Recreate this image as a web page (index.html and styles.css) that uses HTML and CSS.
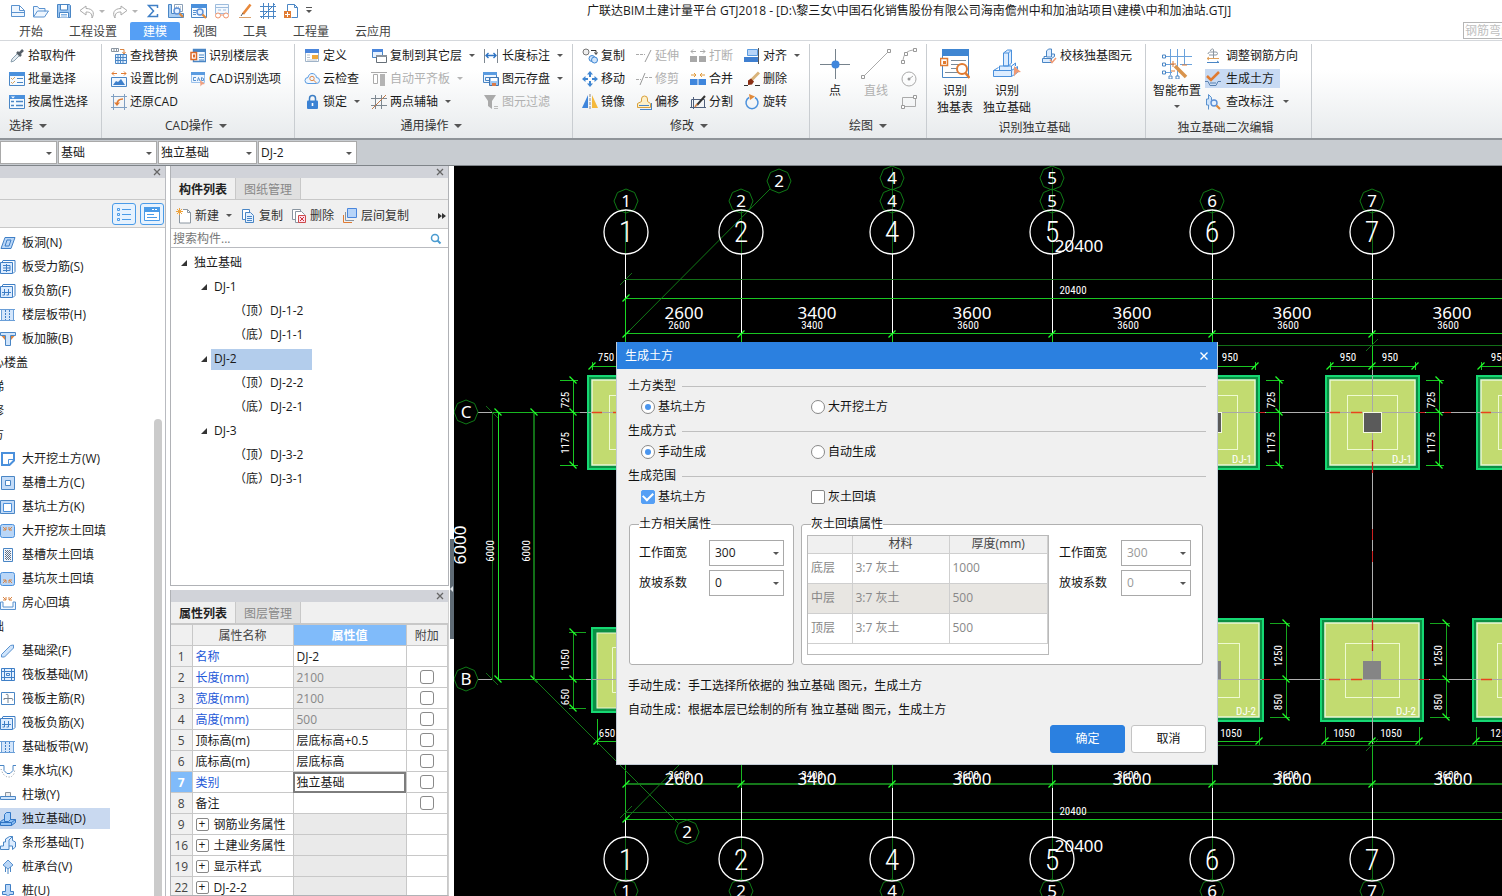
FILE: index.html
```html
<!DOCTYPE html>
<html lang="zh-CN">
<head>
    <meta charset="UTF-8">
    <meta name="viewport" content="width=device-width, initial-scale=1.0">
    <title>广联达BIM土建计量平台 GTJ2018</title>
    <link rel="stylesheet" href="styles.css">
</head>
<body>
    <!-- Icon sprite -->
    <svg class="sprite" aria-hidden="true">
        <defs>
            <g id="blue-table" fill="none" stroke="#4a86c5"><path d="M.5 1.5h15v13H.5z" fill="#f4faff"/><path d="M0 1h16v4H0z" fill="#4a90dc" stroke="none"/></g>
            <g id="magnifier" fill="none"><circle cx="9" cy="9" r="3" stroke="#5b8fd6" stroke-width="1.4" fill="#e6f1ff"/><path d="M11.500 11.500l3.500 3.500" stroke="#e08a3c" stroke-width="2.200"/></g>
            <g id="tick"><path d="M-3.500 3.500l7-7" stroke="#1fff2a" stroke-width="1.200"/></g>
            <g id="tick-dim"><path d="M-6 6L6-6" stroke="#126e17"/></g>
        </defs>
        <symbol id="i-close" viewBox="0 0 8 8"><path d="M1 1l6 6M7 1L1 7" stroke="#666" stroke-width="1.300"/></symbol>
        <symbol id="i-new" viewBox="0 0 16 16"><path d="M1.500 2.500h8l5 5v6h-13zM9.500 2.500v5h5M1 9.500h14" fill="#eef6ff" stroke="#5a92cf"/></symbol>
        <symbol id="i-open" viewBox="0 0 16 16"><path d="M.5 14V3.500h4l1.500 2h6v3M.5 14l4-6h11l-4 6z" fill="#eef6ff" stroke="#5a92cf"/></symbol>
        <symbol id="i-save" viewBox="0 0 16 16"><path d="M1.500 1.500h12l1 1v12h-13z" fill="#9cc6f2" stroke="#4a86c5"/><path d="M4.500 2v5h7V2M3.500 14.500V9.500h9v5" fill="#fff" stroke="#4a86c5"/><path d="M5 11.500h6M5 13h6" stroke="#7fb0e4"/></symbol>
        <symbol id="i-undo" viewBox="0 0 16 16"><path d="M7 3L1 7.500l6 4.500V9c4 0 6 1 6 6 3-5 1-9.500-6-9.500z" fill="#fff" stroke="#aaa"/></symbol>
        <symbol id="i-redo" viewBox="0 0 16 16"><path d="M9 3l6 4.500L9 12V9c-4 0-6 1-6 6-3-5-1-9.500 6-9.500z" fill="#fff" stroke="#aaa"/></symbol>
        <symbol id="i-sum" viewBox="0 0 16 16"><path d="M12.500 5V2.500h-9L8.500 8l-5 5.500h9V11" fill="none" stroke="#3f7fc6" stroke-width="1.500"/></symbol>
        <symbol id="i-report" viewBox="0 0 16 16"><path d="M.5 1.500h3v9h12v4H.5z" fill="#a9cdf3" stroke="#4a86c5"/><path d="M6.500 1.500h8v7h-8z" fill="#fff" stroke="#8aa0b8"/><path d="M8 4h5M8 6h5" stroke="#8aa0b8" stroke-dasharray="1 1"/><use href="#magnifier" y="-1"/></symbol>
        <symbol id="i-winfind" viewBox="0 0 16 16"><use href="#blue-table"/><path d="M2 7.500h4M2 9.500h3M2 11.500h3" stroke="#5a92cf"/><use href="#magnifier"/></symbol>
        <symbol id="i-glasses" viewBox="0 0 16 16"><path d="M1.500 1.500h13v9h-13zM1.500 4.500h13" fill="#f4f9ff" stroke="#9dbcdd"/><path d="M4 7h3M9 7h3" stroke="#9dbcdd"/><circle cx="4" cy="12.500" r="2.500" fill="#fff" stroke="#f0936a"/><circle cx="12" cy="12.500" r="2.500" fill="#fff" stroke="#f0936a"/><path d="M6.500 12h3" stroke="#f0936a"/></symbol>
        <symbol id="i-pen" viewBox="0 0 16 16"><path d="M13.500 1.500L6 11" stroke="#e8883a" stroke-width="2.600"/><path d="M6 10l-2 3" stroke="#555"/><path d="M2 14.500h12" stroke="#d9a06c"/></symbol>
        <symbol id="i-grid" viewBox="0 0 16 16"><path d="M0 3.500h16M0 8.500h16M0 13.500h16M3.500 0v16M8.500 0v16M13.500 0v16M1 15L15 1" stroke="#4a86c5" fill="none"/></symbol>
        <symbol id="i-docplus" viewBox="0 0 16 16"><path d="M4.500 8V1.500h7l3 3v10h-6M11.500 1.500v3h3" fill="none" stroke="#4a86c5"/><path d="M1 8h7v7H1z" fill="#e07b32"/><path d="M2 11.500h5M4.500 9v5" stroke="#fff"/></symbol>

        <symbol id="i-pick" viewBox="0 0 16 16"><path d="M2 14l1-3 6-6 2 2-6 6z" fill="#e4ecf2" stroke="#8ba0ae"/><path d="M8 4l4 4M10 6l4-4" stroke="#555f68" stroke-width="2.600"/></symbol>
        <symbol id="i-batch" viewBox="0 0 16 16"><use href="#blue-table"/><path d="M2 7l1.500 1.500L6 6M2 11l1.500 1.500L6 10" stroke="#d9a05a" fill="none"/><path d="M8 7.500h6M8 11.500h6" stroke="#4a86c5"/></symbol>
        <symbol id="i-byprop" viewBox="0 0 16 16"><use href="#blue-table"/><path d="M2 7.500h3M2 11.500h3M7 7.500h7M7 11.500h7" stroke="#4a86c5" stroke-width="1.400"/><path d="M2 2.500h4l-2 2z" fill="#fff"/></symbol>
        <symbol id="i-replace" viewBox="0 0 16 16"><path d="M.5.500h7v3h-7zM3 .5v3M5.500.500v3" fill="none" stroke="#8a95a0"/><path d="M9 1.500h4v4M11.500 4l1.500 2 1.500-2" stroke="#d98442" fill="none"/><path d="M4.500 6.500h11v9h-11zM7 6.500v9M9.500 6.500v9M12 6.500v9M4.500 9.500h11M4.500 12.500h11" fill="#e3f0ff" stroke="#4a86c5"/></symbol>
        <symbol id="i-scale" viewBox="0 0 16 16"><path d="M1 2.500h5M10 2.500h5M3 .5l-2 2 2 2M13 .5l2 2-2 2" fill="none" stroke="#e07b32"/><path d="M.5 6.500h15v9H.5z" fill="#eef6ff" stroke="#4a86c5"/><path d="M2 14l3-4 2 1 3-3 4 6z" fill="#3d7fcb"/></symbol>
        <symbol id="i-restore" viewBox="0 0 16 16"><path d="M2.500 0v16M0 2.500h16M13.500 0v16M0 13.500h16" stroke="#7f9fc2"/><path d="M12 5C8 5 6 7 6 10.500" fill="none" stroke="#e07b32" stroke-width="1.500"/><path d="M3 8.500h6L6 12z" fill="#e07b32"/></symbol>
        <symbol id="i-floor" viewBox="0 0 16 16"><path d="M3.500 1.500h12v12h-12z" fill="#f4faff" stroke="#4a86c5" stroke-width="1.400"/><path d="M3 1h13v3H3z" fill="#4a86c5"/><path d="M9 7h5M9 9.500h5M9 12h5" stroke="#4a86c5"/><path d="M1 4.500h5.500v7H1z" fill="#fff" stroke="#dd6b2a" stroke-width="1.500"/><path d="M3 6.500h2v3H3z" fill="#dd6b2a"/></symbol>
        <symbol id="i-cadopt" viewBox="0 0 16 16"><path d="M1.500 1.500h13v10h-13z" fill="#eef6ff" stroke="#9cc2ec"/><path d="M1 1h14v3H1z" fill="#5a9be0"/><path d="M6 6.500H3.500v3H6M7.500 10l1-3.500L10 10M11.500 6.500v3h2v-2z" fill="none" stroke="#5a92cf"/><path d="M10 9l5 4-3 .5-1.500 2z" fill="#f0a080"/></symbol>

        <symbol id="i-define" viewBox="0 0 16 16"><path d="M1.500 1.500h13v12h-13z" fill="#fff" stroke="#9fb3c8"/><path d="M1 1h14v4H1z" fill="#4a86dc"/><path d="M3 7h3M3 9.500h3M3 12h10" stroke="#b9c4cf"/><path d="M8 7h6v4H8z" fill="#f0a93c"/></symbol>
        <symbol id="i-cloud" viewBox="0 0 16 16"><path d="M4 12.500h8.500a3 3 0 0 0 0-6C12 3.500 10 2.500 8 2.500S4.500 4 4 6.500a3 3 0 0 0 0 6z" fill="#eef6ff" stroke="#5a9be0"/><circle cx="8" cy="7.500" r="2.200" fill="none" stroke="#e08a4c"/><path d="M9.500 9l3 3" stroke="#e08a4c"/></symbol>
        <symbol id="i-lock" viewBox="0 0 16 16"><path d="M5.500 7V4.500a3 3 0 0 1 6 0V7" fill="none" stroke="#3b7dc4" stroke-width="1.500"/><rect x="3" y="6.500" width="11" height="8.500" rx="1" fill="#3b82d4"/><path d="M8.500 9v3" stroke="#fff" stroke-width="1.600"/></symbol>
        <symbol id="i-copyfloor" viewBox="0 0 16 16"><path d="M1.500 1.500h10v8h-10z" fill="#e7f2ff" stroke="#4a86c5"/><path d="M1 1h11v3H1z" fill="#4a86dc"/><path d="M5.500 7.500h10v7h-10z" fill="#fff" stroke="#666f78"/><path d="M5 7h11v2H5z" fill="#8a939c"/></symbol>
        <symbol id="i-autoflat" viewBox="0 0 16 16"><path d="M0 1.500h16" stroke="#aaa"/><path d="M2.500 3.500h4v9h-4z" fill="#fff" stroke="#aaa"/><path d="M9 3h5v12H9z" fill="#b4b4b4"/></symbol>
        <symbol id="i-axis" viewBox="0 0 16 16"><path d="M4.500 1v14M10.500 1v14M0 4.500h16M0 11.500h16" stroke="#7d8790"/><path d="M1 15L15 1" stroke="#c07a4a"/></symbol>
        <symbol id="i-length" viewBox="0 0 16 16"><path d="M1.500 1v14M14.500 1v14" stroke="#7d8790"/><path d="M3 7.500h10M5.500 5L3 7.500 5.500 10M10.500 5L13 7.500 10.500 10" stroke="#2f74c4" fill="none" stroke-width="1.400"/></symbol>
        <symbol id="i-store" viewBox="0 0 16 16"><path d="M.5 1.500h13v10H.5z" fill="#eef6ff" stroke="#4a86c5"/><path d="M0 1h14v3H0z" fill="#5a9be0"/><path d="M2.500 6.500h4v3h-4z" fill="none" stroke="#4a86c5"/><path d="M6.500 6.500h9v8h-9z" fill="#9cc6f2" stroke="#3f74b0"/><path d="M8 7h6v3H8z" fill="#fff"/><path d="M9 12h4v3H9z" fill="#d97b4a"/></symbol>
        <symbol id="i-filter" viewBox="0 0 16 16"><path d="M1 1h12L9 7v8l-4-3V7z" fill="#aaa"/><path d="M11 12.500h4M11 14.500h4" stroke="#bbb"/></symbol>

        <symbol id="i-copy2" viewBox="0 0 16 16"><circle cx="4" cy="4" r="3" fill="#eee" stroke="#777"/><circle cx="10" cy="10.500" r="3" fill="#cfe4fb" stroke="#3f86d2"/><circle cx="12.500" cy="12" r="3" fill="#cfe4fb" stroke="#3f86d2"/><path d="M9 2.500h5v3M12.500 4.500l1.500 2 1.500-2" fill="none" stroke="#333"/></symbol>
        <symbol id="i-move" viewBox="0 0 16 16"><path d="M8 0l3 3.500H9V6H7V3.500H5zM8 16l3-3.500H9V10H7v2.500H5zM0 8l3.500-3v2H6v2H3.500v2zM16 8l-3.500-3v2H10v2h2.500v2z" fill="#3f86d2"/></symbol>
        <symbol id="i-mirror" viewBox="0 0 16 16"><path d="M6 1v13H0z" fill="#3f86dc"/><path d="M10 1v13h6z" fill="#f5b93c"/><path d="M8 0v16" stroke="#888" stroke-dasharray="3 1"/></symbol>
        <symbol id="i-extend" viewBox="0 0 16 16"><path d="M0 6.500h9" stroke="#aaa" stroke-dasharray="3 1"/><path d="M9 14l6-12" stroke="#999"/></symbol>
        <symbol id="i-trim" viewBox="0 0 16 16"><path d="M0 8.500h5M9 6.500h7" stroke="#aaa" stroke-dasharray="3 1"/><path d="M4 14l5-12" stroke="#999"/></symbol>
        <symbol id="i-offset" viewBox="0 0 16 16"><path d="M1.500 13.500v-4l4-2V5a3 3 0 0 1 6 0v2.500l3 2v4z" fill="#fdf0c8" stroke="#d9a03c"/><path d="M3 11.500h10M4 15.500h12M15.500 9v6" stroke="#4a86c5"/></symbol>
        <symbol id="i-break" viewBox="0 0 16 16"><path d="M0 8h7v6H0zM9 8h7v6H9z" fill="#a8a8a8"/><path d="M1 3.500h5M10 3.500h5M3 1.500l-2 2 2 2M13 1.500l2 2-2 2" fill="none" stroke="#aaa"/></symbol>
        <symbol id="i-merge" viewBox="0 0 16 16"><path d="M0 8h7.500v6H0zM8.500 8H16v6H8.500z" fill="#3f86dc"/><path d="M1 4h5M10 4h5M4 2l2 2-2 2M12 2l-2 2 2 2" fill="none" stroke="#e09a3c"/></symbol>
        <symbol id="i-split" viewBox="0 0 16 16"><path d="M1.500 5.500h13v8h-13zM0 13.500h16M3.500 3v12" fill="none" stroke="#50607c"/><path d="M15 2L7 11" stroke="#333" stroke-width="2"/><path d="M7 10l-2 3" stroke="#d98442" stroke-width="1.500"/></symbol>
        <symbol id="i-align" viewBox="0 0 16 16"><path d="M3.500 1.500h10v6h-10z" fill="#b7d4f8" stroke="#5a9be0"/><path d="M0 9h14v5H0z" fill="#3f7fd0"/><path d="M14.500 0v16" stroke="#555"/></symbol>
        <symbol id="i-erase" viewBox="0 0 16 16"><path d="M15 1.500L7.500 9" stroke="#d9b37a" stroke-width="3"/><path d="M4 9.500l3-2 3 3-2 3-4 .5z" fill="#8a2f14"/><path d="M0 14.500h4M11 14.500h5" stroke="#333"/></symbol>
        <symbol id="i-rotate" viewBox="0 0 16 16"><path d="M11 3.500A6 6 0 1 1 5 3.500" fill="none" stroke="#4a90dc" stroke-width="1.500"/><path d="M5 0l6 2.500L6 6z" fill="#e08a3c"/></symbol>

        <symbol id="i-point" viewBox="0 0 30 30"><path d="M15.500 0v30M0 15.500h30" stroke="#76828c"/><circle cx="15.500" cy="15.500" r="4" fill="#3f86dc"/></symbol>
        <symbol id="i-line" viewBox="0 0 30 30"><path d="M3 27L27 3" stroke="#aaa"/><path d="M.5 26.500h3v3h-3zM26.500.500h3v3h-3z" fill="#fff" stroke="#999"/></symbol>
        <symbol id="i-arc" viewBox="0 0 16 16"><path d="M2 14C2 6 6 2 14 2" fill="none" stroke="#aaa"/><path d="M.5 12.500h3v3h-3zM3.500 4.500h3v3h-3zM12.500.500h3v3h-3z" fill="#fff" stroke="#999"/></symbol>
        <symbol id="i-circle" viewBox="0 0 16 16"><circle cx="8" cy="8" r="7" fill="none" stroke="#aaa"/><path d="M8 8l4-3" stroke="#aaa"/><circle cx="8" cy="8" r="1.500" fill="#999"/></symbol>
        <symbol id="i-rect" viewBox="0 0 16 16"><path d="M1.500 3.500h13v9h-13z" fill="none" stroke="#aaa"/><path d="M.5 11.500h3v3h-3zM12.500 1.500h3v3h-3z" fill="#fff" stroke="#999"/></symbol>
        <symbol id="i-idtable" viewBox="0 0 30 30"><path d="M2.500.500h26v28h-26z" fill="#fff" stroke="#4a86c5"/><path d="M2 0h27v7H2z" fill="#3f86d2"/><path d="M11 11.500h15M11 15.500h10M11 19.500h8M5 23.500h13" stroke="#7a8a99"/><path d="M.5 9.500h7v7h-7z" fill="#fff" stroke="#e07b32" stroke-width="1.500"/><path d="M3 12h3v3H3z" fill="#e07b32"/><circle cx="22" cy="20" r="5" fill="#fff" stroke="#e07b32" stroke-width="2"/><path d="M25.500 24l4 5" stroke="#e07b32" stroke-width="2.500"/></symbol>
        <symbol id="i-footing" viewBox="0 0 30 30"><path d="M11.500 17V4l4-3h4v13l-3 3zM11.500 4h5v13M16.500 4l3-3M7.500 21v-4h12v4M19.500 17l4-3v3M1.500 27.500v-6h18v6zM19.500 21.500l6-4v6l-6 4M1.500 21.500l5-3" fill="#dcecff" stroke="#4a90dc"/><path d="M22 17l7 6-4 .5-3 4z" fill="#f09a74"/></symbol>
        <symbol id="i-check" viewBox="0 0 16 16"><path d="M5.500 9V3l2-2h3v8zM1.500 14.500v-4h9v4zM3 10V8.500h2.500M10.500 10.500l3-2V6h-3" fill="#dcecff" stroke="#4a86c5"/><path d="M9 11.500l2 3L15 10" fill="none" stroke="#f09a74" stroke-width="1.500"/></symbol>
        <symbol id="i-smart" viewBox="0 0 30 30"><path d="M8.500 0v26M15.500 0v30M22.500 0v16M2 7.500h28M2 15.500h10M18 15.500h12M2 23.500h8" stroke="#6aa2dc"/><path d="M.5 6h3v3h-3zM.5 14h3v3h-3zM.5 22h3v3h-3zM7 27h3v3H7zM14 27h3v3h-3z" fill="#fff" stroke="#4a86c5"/><path d="M13 17l11 11" stroke="#d9934c" stroke-width="3.500"/><path d="M11 12v6M8 15h6M20 16h5M9 22h4" stroke="#e07b32"/></symbol>
        <symbol id="i-rebar" viewBox="0 0 16 16"><path d="M8.500 10V2c0-2-3-1-3 1M3 6c0-2 2-2 4-2h4c2 0 2 3 0 3H4" fill="none" stroke="#8a95a0"/><path d="M2 10.500h12M4 9l-2 1.500L4 12" fill="none" stroke="#e0a05a"/><path d="M2 14.500h12M12 13l2 1.500" stroke="#4a86c5"/></symbol>
        <symbol id="i-earth" viewBox="0 0 16 16"><path d="M2 5l4 4 8-8" fill="none" stroke="#e07b32" stroke-width="2.500"/><path d="M0 10.500h3l2 4h6l2-4h3M5 12h6" fill="none" stroke="#5a82b0"/></symbol>
        <symbol id="i-review" viewBox="0 0 16 16"><path d="M3.500 15.500V11h-2V5h2V.500l3 3v3" fill="#cfe4fb" stroke="#5a92cf"/><use href="#magnifier"/></symbol>

        <symbol id="i-add" viewBox="0 0 16 16"><path d="M3.500 3.500V15h11V4.500l-3-3H7M11.500 1.500v3h3" fill="#fff" stroke="#8a95a0"/><path d="M3.500 0v7M0 3.500h7M1 1l5 5M6 1L1 6" stroke="#eda23c"/></symbol>
        <symbol id="i-docs" viewBox="0 0 16 16"><path d="M2.500 1.500h7v10h-7z" fill="#fff" stroke="#4a86c5"/><path d="M5.500 4.500h5l3 3v7h-8z" fill="#e3f0ff" stroke="#4a86c5"/><path d="M7 8.500h5M7 10.500h5M7 12.500h5" stroke="#4a86c5"/></symbol>
        <symbol id="i-docdel" viewBox="0 0 16 16"><path d="M1.500 1.500h8v10h-8z" fill="#fff" stroke="#8a95a0"/><path d="M4.500 3.500h6l3 3v8h-9z" fill="#fff" stroke="#8a95a0"/><path d="M7.500 7.500h7v7h-7z" fill="#fde" stroke="#cc4a4a"/><path d="M9 9l4 4M13 9l-4 4" stroke="#cc3a3a"/></symbol>
        <symbol id="i-layers" viewBox="0 0 16 16"><path d="M1.500 7v7.500H10" fill="none" stroke="#e07b32"/><path d="M3.500 4v8.500H12" fill="none" stroke="#8a95a0"/><path d="M5.500.500h9v9h-9z" fill="#b7d4f8" stroke="#4a86dc"/></symbol>

        <symbol id="i-hole" viewBox="0 0 16 16"><path d="M1 13.500L5 2.500h10l-4 11zM5 11l2-6h4l-2 6z" fill="#b9d6f7" stroke="#3f7fc6"/></symbol>
        <symbol id="i-slabbar" viewBox="0 0 16 16"><path d="M2 3.500l1-2h12v11l-2 2" fill="none" stroke="#3f7fc6"/><path d="M.5 3.500h12v11H.5z" fill="#dcecff" stroke="#3f7fc6"/><path d="M3 6.500h7v5H3M3 9h7M6.500 5v8" fill="none" stroke="#3f7fc6"/></symbol>
        <symbol id="i-negbar" viewBox="0 0 16 16"><path d="M2 3.500l1-2h12v11l-2 2" fill="none" stroke="#3f7fc6"/><path d="M.5 3.500h12v11H.5z" fill="#dcecff" stroke="#3f7fc6"/><path d="M2 9.500h9M4.500 6v6h-2M8.500 6v6h-2" fill="none" stroke="#3f7fc6"/></symbol>
        <symbol id="i-strip" viewBox="0 0 16 16"><path d="M1 3h13v10H1z" fill="#d4e6fb"/><path d="M1.500 3v10M13.500 3v10M0 2.500h15M0 13.500h15" stroke="#6a9fd8"/><path d="M5.500 3v10M9.500 3v10" stroke="#3f7fc6" stroke-dasharray="2 1"/></symbol>
        <symbol id="i-haunch" viewBox="0 0 16 16"><path d="M.5 1.500h15v3h-5v10h-5v-10h-5z" fill="#cfe4fb" stroke="#4a86c5"/><path d="M1.500 5H5v4zM14.500 5H11v4z" fill="#d98442"/></symbol>
        <symbol id="i-bigpit" viewBox="0 0 16 16"><path d="M2 2h12v7.500L9.500 14H2z" fill="#fff" stroke="#4a90dc" stroke-width="2"/><path d="M8.500 13V8.500H13" fill="none" stroke="#4a90dc"/></symbol>
        <symbol id="i-trench" viewBox="0 0 16 16"><path d="M1.500 1.500h13v13h-13z" fill="#c4dcf8" stroke="#4a86c5"/><path d="M5.500 5.500h5v5h-5z" fill="#fff" stroke="#4a86c5"/></symbol>
        <symbol id="i-pit" viewBox="0 0 16 16"><path d="M.5 1.500h14v13H.5z" fill="#c4dcf8" stroke="#4a86c5"/><path d="M3.500 4.500h8v8h-8z" fill="#fff" stroke="#4a90dc"/></symbol>
        <symbol id="i-bigfill" viewBox="0 0 16 16"><rect x=".5" y="1.500" width="14" height="13" rx="2" fill="#b9d6f7" stroke="#4a90dc"/><path d="M3 4l3 3M6 4v3H3M12 4L9 7M9 4v3h3" fill="none" stroke="#d98442"/></symbol>
        <symbol id="i-trenchfill" viewBox="0 0 16 16"><path d="M3.500 1.500h9v13h-9z" fill="#f2f6fc" stroke="#4a86c5"/><path d="M5.500 3v10M7.500 3v10M9.500 3v10" stroke="#5f6f85" stroke-dasharray="1 1"/><path d="M6.500 4v9M8.500 4v9M10.500 4v9" stroke="#5f6f85" stroke-dasharray="1 1"/></symbol>
        <symbol id="i-pitfill" viewBox="0 0 16 16"><rect x=".5" y="1.500" width="14" height="13" rx="2" fill="#b9d6f7" stroke="#4a90dc"/><path d="M3 12l3-3M3 9h3v3M12 12L9 9M12 9H9v3" fill="none" stroke="#d98442"/></symbol>
        <symbol id="i-roomfill" viewBox="0 0 16 16"><path d="M.5 7v7.500h15V7H13v5H3V7z" fill="#eef6ff" stroke="#5a92cf"/><path d="M3 2l3 3M6 2v3H3M12 2L9 5M9 2v3h3" fill="none" stroke="#d98442"/></symbol>
        <symbol id="i-beam" viewBox="0 0 16 16"><path d="M1.500 11.500l9-9 3-.5v3l-9 9h-3z" fill="#cfe4fb" stroke="#5a92cf"/></symbol>
        <symbol id="i-raft" viewBox="0 0 16 16"><path d="M1.500 1.500h13v12h-13zM4.500 1.500v12M11.500 1.500v12M1.500 4.500h13M1.500 10.500h13M6.500 6.500h3v2h-3z" fill="#e3f0ff" stroke="#3f7fc6"/></symbol>
        <symbol id="i-raftbar" viewBox="0 0 16 16"><path d="M1.500 1.500h13v12h-13z" fill="#fff" stroke="#4a86c5"/><path d="M8 12V4c0-1-2-1-2 0M4 9V7.500h8c1 0 1 2 0 2" fill="none" stroke="#7a8590"/></symbol>
        <symbol id="i-sump" viewBox="0 0 16 16"><path d="M0 2.500h4v5l3 3h3l3-3v-5h3" fill="none" stroke="#4a86c5"/><path d="M1 6l2 5 4 3h4l3-3 1-5" fill="none" stroke="#8a95a0" stroke-dasharray="1 2"/></symbol>
        <symbol id="i-pier" viewBox="0 0 16 16"><path d="M5.500 9.500v-4h5v4" fill="#eee" stroke="#8a95a0"/><path d="M.5 9.500h15v3H.5z" fill="#cfe4fb" stroke="#4a86c5"/></symbol>
        <symbol id="i-isolated" viewBox="0 0 16 16"><path d="M.5 14.500v-4l3-2h12v3l-4 3z" fill="#8ec0f5" stroke="#2f74c4"/><path d="M4.500 10.500v-7l2-2h4v7l-2 2z" fill="#a9d0fa" stroke="#2f74c4"/><path d="M.5 11.500h11v3M11.500 11.500l4-3" fill="none" stroke="#2f74c4"/></symbol>
        <symbol id="i-stripf" viewBox="0 0 16 16"><path d="M.5 14.500V11h3V7h2V4l4-2.500h3v4l3 1.500v5l-3 2.500V11H9v3.500z" fill="#dcecff" stroke="#4a86c5"/><path d="M9 11V5l3.500-3.500" fill="none" stroke="#4a86c5"/></symbol>
        <symbol id="i-cap" viewBox="0 0 16 16"><path d="M8 1l5 5-5 4-5-4z" fill="#b9d6f7" stroke="#5a92cf"/><path d="M5.500 8v5M8 10v5M10.500 8v5" stroke="#4a86c5"/></symbol>
        <symbol id="i-pile" viewBox="0 0 16 16"><path d="M5.500 1.500h5v7h3v3h-4l-1.500 3-1.500-3h-4v-3h3z" fill="#b9d6f7" stroke="#3f7fc6"/></symbol>
    </svg>

    <!-- Title bar -->
    <header class="titlebar">
        <div class="quick">
            <svg><use href="#i-new"/></svg>
            <svg><use href="#i-open"/></svg>
            <svg><use href="#i-save"/></svg>
            <svg><use href="#i-undo"/></svg><i class="caret light"></i>
            <svg><use href="#i-redo"/></svg><i class="caret light"></i>
            <svg><use href="#i-sum"/></svg>
            <svg><use href="#i-report"/></svg>
            <svg><use href="#i-winfind"/></svg>
            <svg><use href="#i-glasses"/></svg>
            <svg><use href="#i-pen"/></svg>
            <svg><use href="#i-grid"/></svg>
            <svg><use href="#i-docplus"/></svg>
            <i class="caret overflow"></i>
        </div>
        <h1>广联达BIM土建计量平台 GTJ2018 - [D:\黎三女\中国石化销售股份有限公司海南儋州中和加油站项目\建模\中和加油站.GTJ]</h1>
    </header>

    <nav class="tabs">
        <button>开始</button>
        <button>工程设置</button>
        <button class="active">建模</button>
        <button>视图</button>
        <button>工具</button>
        <button>工程量</button>
        <button>云应用</button>
        <input class="help-search" type="text" placeholder="钢筋弯曲" aria-label="搜索帮助">
    </nav>

    <!-- Ribbon -->
    <div class="ribbon">
        <section class="group">
            <div class="cols">
                <div class="col">
                    <button><svg><use href="#i-pick"/></svg>拾取构件</button>
                    <button><svg><use href="#i-batch"/></svg>批量选择</button>
                    <button><svg><use href="#i-byprop"/></svg>按属性选择</button>
                </div>
            </div>
            <button class="group-name start">选择<i class="caret big"></i></button>
        </section>
        <section class="group">
            <div class="cols">
                <div class="col">
                    <button><svg><use href="#i-replace"/></svg>查找替换</button>
                    <button><svg><use href="#i-scale"/></svg>设置比例</button>
                    <button><svg><use href="#i-restore"/></svg>还原CAD</button>
                </div>
                <div class="col">
                    <button><svg><use href="#i-floor"/></svg>识别楼层表</button>
                    <button><svg><use href="#i-cadopt"/></svg>CAD识别选项</button>
                </div>
            </div>
            <button class="group-name">CAD操作<i class="caret big"></i></button>
        </section>
        <section class="group">
            <div class="cols">
                <div class="col">
                    <button><svg><use href="#i-define"/></svg>定义</button>
                    <button><svg><use href="#i-cloud"/></svg>云检查</button>
                    <button><svg><use href="#i-lock"/></svg>锁定<i class="caret"></i></button>
                </div>
                <div class="col">
                    <button><svg><use href="#i-copyfloor"/></svg>复制到其它层<i class="caret"></i></button>
                    <button disabled><svg><use href="#i-autoflat"/></svg>自动平齐板<i class="caret light"></i></button>
                    <button><svg><use href="#i-axis"/></svg>两点辅轴<i class="caret"></i></button>
                </div>
                <div class="col">
                    <button><svg><use href="#i-length"/></svg>长度标注<i class="caret"></i></button>
                    <button><svg><use href="#i-store"/></svg>图元存盘<i class="caret"></i></button>
                    <button disabled><svg><use href="#i-filter"/></svg>图元过滤</button>
                </div>
            </div>
            <button class="group-name">通用操作<i class="caret big"></i></button>
        </section>
        <section class="group">
            <div class="cols tight">
                <div class="col">
                    <button><svg><use href="#i-copy2"/></svg>复制</button>
                    <button><svg><use href="#i-move"/></svg>移动</button>
                    <button><svg><use href="#i-mirror"/></svg>镜像</button>
                </div>
                <div class="col">
                    <button disabled><svg><use href="#i-extend"/></svg>延伸</button>
                    <button disabled><svg><use href="#i-trim"/></svg>修剪</button>
                    <button><svg><use href="#i-offset"/></svg>偏移</button>
                </div>
                <div class="col">
                    <button disabled><svg><use href="#i-break"/></svg>打断</button>
                    <button><svg><use href="#i-merge"/></svg>合并</button>
                    <button><svg><use href="#i-split"/></svg>分割</button>
                </div>
                <div class="col">
                    <button><svg><use href="#i-align"/></svg>对齐<i class="caret"></i></button>
                    <button><svg><use href="#i-erase"/></svg>删除</button>
                    <button><svg><use href="#i-rotate"/></svg>旋转</button>
                </div>
            </div>
            <button class="group-name">修改<i class="caret big"></i></button>
        </section>
        <section class="group draw">
            <div class="cols">
                <button class="large"><svg><use href="#i-point"/></svg><span>点</span></button>
                <button class="large" disabled><svg><use href="#i-line"/></svg><span>直线</span></button>
                <div class="col">
                    <button disabled aria-label="圆弧"><svg><use href="#i-arc"/></svg></button>
                    <button disabled aria-label="圆"><svg><use href="#i-circle"/></svg></button>
                    <button disabled aria-label="矩形"><svg><use href="#i-rect"/></svg></button>
                </div>
            </div>
            <button class="group-name">绘图<i class="caret big"></i></button>
        </section>
        <section class="group identify">
            <div class="cols">
                <button class="large"><svg><use href="#i-idtable"/></svg><span>识别<br>独基表</span></button>
                <button class="large"><svg><use href="#i-footing"/></svg><span>识别<br>独立基础</span></button>
                <div class="col">
                    <button><svg><use href="#i-check"/></svg>校核独基图元</button>
                </div>
            </div>
            <div class="group-name low">识别独立基础</div>
        </section>
        <section class="group edit">
            <div class="cols">
                <button class="large"><svg><use href="#i-smart"/></svg><span>智能布置</span><i class="caret"></i></button>
                <div class="col">
                    <button><svg><use href="#i-rebar"/></svg>调整钢筋方向</button>
                    <button class="on"><svg><use href="#i-earth"/></svg>生成土方</button>
                    <button><svg><use href="#i-review"/></svg>查改标注<i class="caret"></i></button>
                </div>
            </div>
            <div class="group-name low">独立基础二次编辑</div>
        </section>
    </div>

    <div class="contextbar">
        <span class="combo first"><select aria-label="楼层"><option></option></select></span>
        <span class="combo"><select aria-label="分类"><option>基础</option></select></span>
        <span class="combo"><select aria-label="构件类型"><option>独立基础</option></select></span>
        <span class="combo"><select aria-label="构件"><option>DJ-2</option></select></span>
    </div>

    <main class="workspace">
        <!-- Navigation -->
        <aside class="nav-panel">
            <div class="panel-title"><button aria-label="关闭"><svg><use href="#i-close"/></svg></button></div>
            <div class="nav-head"></div>
            <div class="nav-tools">
                <button aria-label="列表"><svg viewBox="0 0 16 16"><path d="M1.500 2.500h2v2h-2zM1.500 7.500h2v2h-2zM1.500 12.500h2v2h-2zM6 3.500h9M6 8.500h9M6 13.500h9" fill="none" stroke="#4a9be8"/></svg></button>
                <button aria-label="窗口"><svg viewBox="0 0 16 16"><path d="M.5 1.500h15v13H.5z" fill="#fff" stroke="#4a9be8"/><path d="M0 1h16v5H0z" fill="#4a9be8"/><path d="M3 8.500h7M3 11.500h10" stroke="#4a9be8"/><path d="M8 3.500h2M11 3.500h2" stroke="#fff"/></svg></button>
            </div>
            <ul class="nav-list">
                <li><svg><use href="#i-hole"/></svg>板洞(N)</li>
                <li><svg><use href="#i-slabbar"/></svg>板受力筋(S)</li>
                <li><svg><use href="#i-negbar"/></svg>板负筋(F)</li>
                <li><svg><use href="#i-strip"/></svg>楼层板带(H)</li>
                <li><svg><use href="#i-haunch"/></svg>板加腋(B)</li>
                <li class="category">空心楼盖</li>
                <li class="category">楼梯</li>
                <li class="category">装修</li>
                <li class="category">土方</li>
                <li><svg><use href="#i-bigpit"/></svg>大开挖土方(W)</li>
                <li><svg><use href="#i-trench"/></svg>基槽土方(C)</li>
                <li><svg><use href="#i-pit"/></svg>基坑土方(K)</li>
                <li><svg><use href="#i-bigfill"/></svg>大开挖灰土回填</li>
                <li><svg><use href="#i-trenchfill"/></svg>基槽灰土回填</li>
                <li><svg><use href="#i-pitfill"/></svg>基坑灰土回填</li>
                <li><svg><use href="#i-roomfill"/></svg>房心回填</li>
                <li class="category">基础</li>
                <li><svg><use href="#i-beam"/></svg>基础梁(F)</li>
                <li><svg><use href="#i-raft"/></svg>筏板基础(M)</li>
                <li><svg><use href="#i-raftbar"/></svg>筏板主筋(R)</li>
                <li><svg><use href="#i-negbar"/></svg>筏板负筋(X)</li>
                <li><svg><use href="#i-strip"/></svg>基础板带(W)</li>
                <li><svg><use href="#i-sump"/></svg>集水坑(K)</li>
                <li><svg><use href="#i-pier"/></svg>柱墩(Y)</li>
                <li class="selected"><svg><use href="#i-isolated"/></svg>独立基础(D)</li>
                <li><svg><use href="#i-stripf"/></svg>条形基础(T)</li>
                <li><svg><use href="#i-cap"/></svg>桩承台(V)</li>
                <li><svg><use href="#i-pile"/></svg>桩(U)</li>
            </ul>
            <div class="scroll-thumb"></div>
        </aside>

        <div class="side">
            <!-- Component list -->
            <section class="panel components">
                <div class="panel-title"><button aria-label="关闭"><svg><use href="#i-close"/></svg></button></div>
                <div class="panel-tabs">
                    <button class="active">构件列表</button>
                    <button>图纸管理</button>
                </div>
                <div class="toolbar">
                    <button><svg><use href="#i-add"/></svg>新建<i class="caret"></i></button>
                    <button><svg><use href="#i-docs"/></svg>复制</button>
                    <button><svg><use href="#i-docdel"/></svg>删除</button>
                    <button><svg><use href="#i-layers"/></svg>层间复制</button>
                    <button class="more" aria-label="更多"><svg viewBox="0 0 8 8"><path d="M0 1l4 3-4 3zM4 1l4 3-4 3z" fill="#333"/></svg></button>
                </div>
                <div class="search">
                    <input type="text" placeholder="搜索构件..." aria-label="搜索构件">
                    <svg viewBox="0 0 12 12"><circle cx="5" cy="5" r="3.500" fill="none" stroke="#4a9bd0" stroke-width="1.500"/><path d="M7.500 7.500l3 3" stroke="#4a9bd0" stroke-width="2"/></svg>
                </div>
                <ul class="tree">
                    <li class="open"><span>独立基础</span></li>
                    <li class="open l2"><span>DJ-1</span></li>
                    <li class="l3"><span>（顶）DJ-1-2</span></li>
                    <li class="l3"><span>（底）DJ-1-1</span></li>
                    <li class="open l2 selected"><span>DJ-2</span></li>
                    <li class="l3"><span>（顶）DJ-2-2</span></li>
                    <li class="l3"><span>（底）DJ-2-1</span></li>
                    <li class="open l2"><span>DJ-3</span></li>
                    <li class="l3"><span>（顶）DJ-3-2</span></li>
                    <li class="l3"><span>（底）DJ-3-1</span></li>
                </ul>
            </section>

            <!-- Properties -->
            <section class="panel properties">
                <div class="panel-title"><button aria-label="关闭"><svg><use href="#i-close"/></svg></button></div>
                <div class="panel-tabs">
                    <button class="active">属性列表</button>
                    <button>图层管理</button>
                </div>
                <table class="props">
                    <colgroup><col class="c-num"><col class="c-name"><col class="c-value"><col class="c-extra"></colgroup>
                    <thead>
                        <tr><th></th><th>属性名称</th><th class="hot">属性值</th><th>附加</th></tr>
                    </thead>
                    <tbody>
                        <tr><th>1</th><td class="link">名称</td><td>DJ-2</td><td></td></tr>
                        <tr><th>2</th><td class="link">长度(mm)</td><td class="locked">2100</td><td><input type="checkbox" aria-label="长度附加"></td></tr>
                        <tr><th>3</th><td class="link">宽度(mm)</td><td class="locked">2100</td><td><input type="checkbox" aria-label="宽度附加"></td></tr>
                        <tr><th>4</th><td class="link">高度(mm)</td><td class="locked">500</td><td><input type="checkbox" aria-label="高度附加"></td></tr>
                        <tr><th>5</th><td>顶标高(m)</td><td>层底标高+0.5</td><td><input type="checkbox" aria-label="顶标高附加"></td></tr>
                        <tr><th>6</th><td>底标高(m)</td><td>层底标高</td><td><input type="checkbox" aria-label="底标高附加"></td></tr>
                        <tr><th class="hot">7</th><td class="link">类别</td><td class="editing">独立基础</td><td><input type="checkbox" aria-label="类别附加"></td></tr>
                        <tr><th>8</th><td>备注</td><td></td><td><input type="checkbox" aria-label="备注附加"></td></tr>
                        <tr><th>9</th><td><button class="expand">+</button>钢筋业务属性</td><td class="locked"></td><td></td></tr>
                        <tr><th>16</th><td><button class="expand">+</button>土建业务属性</td><td class="locked"></td><td></td></tr>
                        <tr><th>19</th><td><button class="expand">+</button>显示样式</td><td class="locked"></td><td></td></tr>
                        <tr><th>22</th><td><button class="expand">+</button>DJ-2-2</td><td class="locked"></td><td></td></tr>
                    </tbody>
                </table>
            </section>
        </div>

        <div class="splitter"><button aria-label="折叠"></button></div>

        <!-- Drawing area -->
        <div class="canvas">
            <svg class="drawing">
                <defs>
                    <path id="octagon" d="M0-12L8.500-8.500L12 0L8.500 8.500L0 12L-8.500 8.500L-12 0L-8.500-8.500z" fill="none" stroke="#0f7a16"/>
                    <circle id="bubble" r="22" fill="none" stroke="#fff" stroke-width="1.300"/>
                    <g id="dj1">
                        <rect x="-46" y="-36" width="93" height="93" fill="#0a8f43" stroke="#16d873" stroke-width="2"/>
                        <rect x="-42" y="-32" width="85" height="85" fill="#c2db70" stroke="#e9f7d6" stroke-width="1.500"/>
                        <rect x="-24.500" y="-16.500" width="50" height="54" fill="none" stroke="#eefad0"/>
                        <path d="M-46 0.500H46M.5-36V57" stroke="#a8a8a8"/>
                        <path d="M-42 .5h10M-21 .5h11" stroke="#e8441c" stroke-width="1.300"/>
                        <path d="M.5 28v11M.5 50v11" stroke="#c22" stroke-width="1.300"/>
                        <rect x="-8.500" y=".5" width="18" height="20" fill="#5a5a5a" stroke="#f4f9e4"/>
                    </g>
                    <g id="dj2">
                        <rect x="-51" y="-60" width="102" height="102" fill="#0a8f43" stroke="#16d873" stroke-width="2"/>
                        <rect x="-47" y="-56" width="94" height="94" fill="#c2db70" stroke="#e9f7d6" stroke-width="1.500"/>
                        <rect x="-26.500" y="-35.500" width="54" height="54" fill="none" stroke="#eefad0"/>
                        <path d="M-51 .5H51M.5-60V43" stroke="#a8a8a8"/>
                        <path d="M-43 .5h11M-21 .5h11" stroke="#e8441c" stroke-width="1.300"/>
                        <path d="M.5-59v10M.5-39v11" stroke="#c22" stroke-width="1.300"/>
                        <rect x="-9" y="-18" width="18" height="18" fill="#858585"/>
                    </g>
                    <g id="dim-725">
                        <path d="M.5-32V53M-13-31.500H5M-13 .5H3M-13 53.500H5" stroke="#19c522" fill="none"/>
                        <use href="#tick" transform="translate(0 -32) rotate(90)"/><use href="#tick" transform="rotate(90)"/><use href="#tick" transform="translate(0 53) rotate(90)"/>
                    </g>
                    <g id="dim-1250">
                        <path d="M.5-56V38M-16-55.500H4M-16 .5H3M-16 38.500H4" stroke="#15a51d" fill="none"/>
                        <use href="#tick" transform="translate(0 -56) rotate(90)"/><use href="#tick" transform="rotate(90)"/><use href="#tick" transform="translate(0 38) rotate(90)"/>
                    </g>
                </defs>

                <g transform="translate(-454 -166)">
                    <!-- Row axes -->
                    <g shape-rendering="crispEdges">
                        <path d="M478 412.500h14M580 412.500h40M1218 412.500h284M478 679.500h14M1218 679.500h284M586 679.500h30" stroke="#b0b0b0"/>
                        <path d="M492 412.500h88M498 679.500h88" stroke="#18b821"/>
                        <path d="M492.500 412v267" stroke="#126e17"/>
                        <path d="M498.500 412v267" stroke="#1fe52a"/>
                        <path d="M534 412v267" stroke="#126e17" stroke-width="2"/>
                    </g>
                    <g>
                        <use href="#tick-dim" transform="translate(492 412) rotate(90)"/><use href="#tick-dim" transform="translate(492 679) rotate(90)"/>
                        <use href="#tick" transform="translate(498 412) rotate(90)"/><use href="#tick" transform="translate(534 412) rotate(90)"/>
                        <use href="#tick" transform="translate(498 679) rotate(90)"/><use href="#tick" transform="translate(534 679) rotate(90)"/>
                    </g>

                    <!-- Column axes and overall dimensions -->
                    <g shape-rendering="crispEdges" fill="none">
                        <path d="M741.500 254v80M892.500 254v80M1052.500 254v80M1212.500 254v80M1372.500 254v80M625.500 254v44" stroke="#fff"/>
                        <path d="M625.500 298v50M741.500 334v14M892.500 334v14M1052.500 334v14M1212.500 334v14M1372.500 334v36" stroke="#19d522"/>
                        <path d="M626 279.500h876M1218 345.500h284M626 812.500h876M1218 745.500h284" stroke="#126e17"/>
                        <path d="M626 298.500h876M626 333.500h876M626 819.500h876" stroke="#19c522"/>
                        <path d="M626 784h876" stroke="#15781a" stroke-width="2"/>
                        <path d="M625.500 764v56M741.500 764v24M892.500 764v24M1052.500 764v24M1212.500 764v24M1372.500 745v43" stroke="#19b522"/>
                        <path d="M625.500 820v18M741.500 788v50M892.500 788v50M1052.500 788v50M1212.500 788v50M1372.500 788v50" stroke="#fff"/>
                        <path d="M625.500 209v45M741.500 209v45M892.500 168v86M1052.500 168v86M1212.500 209v45M1372.500 209v45M625.500 838v43M741.500 838v43M892.500 838v43M1052.500 838v43M1212.500 838v43M1372.500 838v43" stroke="#0f6a16"/>
                        <path d="M1372.500 370v375" stroke="#b0b0b0"/>
                        <path d="M1372.500 529v11M1372.500 551v11" stroke="#c22"/>
                    </g>
                    <g fill="none" stroke="#117a17">
                        <path d="M626 334L770 189M534 679l144 144M626 819l53-54"/>
                    </g>
                    <g>
                        <use href="#tick-dim" x="626" y="279"/><use href="#tick-dim" x="626" y="812"/><use href="#tick-dim" x="1372" y="345"/><use href="#tick-dim" x="1372" y="745"/>
                        <use href="#tick" x="626" y="298"/><use href="#tick" x="626" y="819"/>
                        <use href="#tick" x="626" y="334"/><use href="#tick" x="741" y="334"/><use href="#tick" x="892" y="334"/><use href="#tick" x="1052" y="334"/><use href="#tick" x="1212" y="334"/><use href="#tick" x="1372" y="334"/>
                        <use href="#tick" x="626" y="784"/><use href="#tick" x="741" y="784"/><use href="#tick" x="892" y="784"/><use href="#tick" x="1052" y="784"/><use href="#tick" x="1212" y="784"/><use href="#tick" x="1372" y="784"/>
                    </g>

                    <!-- Axis bubbles -->
                    <use href="#octagon" x="626" y="201"/><use href="#octagon" x="741" y="201"/><use href="#octagon" x="892" y="201"/><use href="#octagon" x="892" y="178"/><use href="#octagon" x="1052" y="201"/><use href="#octagon" x="1052" y="178"/><use href="#octagon" x="1212" y="201"/><use href="#octagon" x="1372" y="201"/>
                    <use href="#octagon" x="779" y="181"/><use href="#octagon" x="687" y="832"/><use href="#octagon" x="466" y="412"/><use href="#octagon" x="466" y="679"/>
                    <use href="#octagon" x="626" y="891"/><use href="#octagon" x="741" y="891"/><use href="#octagon" x="892" y="891"/><use href="#octagon" x="1052" y="891"/><use href="#octagon" x="1212" y="891"/><use href="#octagon" x="1372" y="891"/>
                    <use href="#bubble" x="626" y="232"/><use href="#bubble" x="741" y="232"/><use href="#bubble" x="892" y="232"/><use href="#bubble" x="1052" y="232"/><use href="#bubble" x="1212" y="232"/><use href="#bubble" x="1372" y="232"/>
                    <use href="#bubble" x="626" y="859"/><use href="#bubble" x="741" y="859"/><use href="#bubble" x="892" y="859"/><use href="#bubble" x="1052" y="859"/><use href="#bubble" x="1212" y="859"/><use href="#bubble" x="1372" y="859"/>
                    <g class="label">
                        <text x="626" y="207">1</text><text x="741" y="207">2</text><text x="892" y="207">4</text><text x="892" y="184">4</text><text x="1052" y="207">5</text><text x="1052" y="184">5</text><text x="1212" y="207">6</text><text x="1372" y="207">7</text>
                        <text x="779" y="187">2</text><text x="687" y="838">2</text><text x="466" y="418">C</text><text x="466" y="685">B</text>
                        <text x="626" y="897">1</text><text x="741" y="897">2</text><text x="892" y="897">4</text><text x="1052" y="897">5</text><text x="1212" y="897">6</text><text x="1372" y="897">7</text>
                        <text x="684" y="319">2600</text><text x="817" y="319">3400</text><text x="972" y="319">3600</text><text x="1132" y="319">3600</text><text x="1292" y="319">3600</text><text x="1452" y="319">3600</text>
                        <text x="684" y="785">2600</text><text x="817" y="785">3400</text><text x="972" y="785">3600</text><text x="1132" y="785">3600</text><text x="1292" y="785">3600</text><text x="1453" y="785">3600</text>
                        <text x="1079" y="252">20400</text><text x="1079" y="852">20400</text>
                        <text transform="translate(466 545) rotate(-90)">6000</text>
                    </g>
                    <g class="axis-num">
                        <text x="626" y="242">1</text><text x="741" y="242">2</text><text x="892" y="242">4</text><text x="1052" y="242">5</text><text x="1212" y="242">6</text><text x="1372" y="242">7</text>
                        <text x="626" y="870">1</text><text x="741" y="870">2</text><text x="892" y="870">4</text><text x="1052" y="870">5</text><text x="1212" y="870">6</text><text x="1372" y="870">7</text>
                    </g>

                    <!-- Footings -->
                    <use href="#dj1" x="634" y="412"/><use href="#dj1" x="1212" y="412"/><use href="#dj1" x="1372" y="412"/><use href="#dj1" x="1523" y="412"/>
                    <rect x="592" y="628" width="80" height="84" fill="#0a8f43" stroke="#16d873" stroke-width="2"/>
                    <rect x="597" y="633" width="80" height="75" fill="#c2db70" stroke="#e9f7d6"/>
                    <path d="M640 647.500h-27.500v45h28" fill="none" stroke="#eefad0"/>
                    <path d="M592 679.500h30" stroke="#a8a8a8"/>
                    <use href="#dj2" x="1212" y="679"/><use href="#dj2" x="1372" y="679"/><use href="#dj2" x="1524" y="679"/>

                    <!-- Footing dimensions -->
                    <use href="#dim-725" x="573" y="412"/><use href="#dim-725" x="1279" y="412"/><use href="#dim-725" x="1439" y="412"/>
                    <use href="#dim-1250" x="1286" y="679"/><use href="#dim-1250" x="1446" y="679"/>
                    <g fill="none" stroke="#15a51d">
                        <path d="M573.500 632v76M569 632.500h17M569 708.500h17"/>
                        <path d="M592 366.500h30M1212 366.500h43M1330 366.500h85M1481 366.500h21M592.500 362v8M1330.500 362v8M1415.500 362v8M1481.500 362v8M1255.500 362v8" stroke="#19c522"/>
                        <path d="M597.500 719v26M597 741.500h20M1212 741.500h47M1325 741.500h94M1477 741.500h25" stroke="#19c522"/>
                        <path d="M1259.500 727v18M1325.500 727v18M1419.500 727v18M1476.500 727v18"/>
                        <path d="M1419 412.500h6M1444 412.500h7M1259 412.500h6M1419 679.500h10M1262 679.500h8" stroke="#c22"/>
                    </g>
                    <g>
                        <use href="#tick" x="592" y="366"/><use href="#tick" x="1255" y="366"/><use href="#tick" x="1330" y="366"/><use href="#tick" x="1372" y="366"/><use href="#tick" x="1415" y="366"/><use href="#tick" x="1481" y="366"/>
                        <use href="#tick" x="597" y="741"/><use href="#tick" x="1259" y="741"/><use href="#tick" x="1325" y="741"/><use href="#tick" x="1372" y="741"/><use href="#tick" x="1419" y="741"/><use href="#tick" x="1476" y="741"/>
                        <use href="#tick" transform="translate(573 632) rotate(90)"/><use href="#tick" transform="translate(573 679) rotate(90)"/><use href="#tick" transform="translate(573 708) rotate(90)"/>
                    </g>
                    <g class="dim">
                        <text x="679" y="329">2600</text><text x="812" y="329">3400</text><text x="968" y="329">3600</text><text x="1128" y="329">3600</text><text x="1288" y="329">3600</text><text x="1448" y="329">3600</text>
                        <text x="679" y="779">2600</text><text x="812" y="779">3400</text><text x="968" y="779">3600</text><text x="1128" y="779">3600</text><text x="1288" y="779">3600</text><text x="1448" y="779">3600</text>
                        <text x="1073" y="294">20400</text><text x="1073" y="815">20400</text>
                        <text x="606" y="361">750</text><text x="1230" y="361">950</text><text x="1348" y="361">950</text><text x="1390" y="361">950</text><text x="1499" y="361">950</text>
                        <text x="607" y="737">650</text><text x="1231" y="737">1050</text><text x="1344" y="737">1050</text><text x="1391" y="737">1050</text><text x="1501" y="737">1250</text>
                        <text transform="translate(494 551) rotate(-90)">6000</text><text transform="translate(530 551) rotate(-90)">6000</text>
                        <text transform="translate(569 400) rotate(-90)">725</text><text transform="translate(569 443) rotate(-90)">1175</text>
                        <text transform="translate(1275 400) rotate(-90)">725</text><text transform="translate(1275 443) rotate(-90)">1175</text>
                        <text transform="translate(1435 400) rotate(-90)">725</text><text transform="translate(1435 443) rotate(-90)">1175</text>
                        <text transform="translate(569 660) rotate(-90)">1050</text><text transform="translate(569 697) rotate(-90)">650</text>
                        <text transform="translate(1282 656) rotate(-90)">1250</text><text transform="translate(1282 702) rotate(-90)">850</text>
                        <text transform="translate(1442 656) rotate(-90)">1250</text><text transform="translate(1442 702) rotate(-90)">850</text>
                        <text x="1242" y="463">DJ-1</text><text x="1402" y="463">DJ-1</text><text x="1246" y="715">DJ-2</text><text x="1406" y="715">DJ-2</text>
                    </g>
                </g>
            </svg>

            <!-- Earthwork dialog -->
            <form class="dialog">
                <header><h2>生成土方</h2><button type="button" aria-label="关闭"><svg viewBox="0 0 8 8"><path d="M.5.500l7 7M7.500.500l-7 7" stroke="#fff" stroke-width="1.400"/></svg></button></header>
                <div class="dialog-body">
                    <h3>土方类型</h3>
                    <div class="choices">
                        <label><input type="radio" name="type" checked>基坑土方</label>
                        <label><input type="radio" name="type">大开挖土方</label>
                    </div>
                    <h3>生成方式</h3>
                    <div class="choices">
                        <label><input type="radio" name="mode" checked>手动生成</label>
                        <label><input type="radio" name="mode">自动生成</label>
                    </div>
                    <h3>生成范围</h3>
                    <div class="choices">
                        <label><input type="checkbox" checked>基坑土方</label>
                        <label><input type="checkbox">灰土回填</label>
                    </div>
                    <div class="sets">
                        <fieldset>
                            <legend>土方相关属性</legend>
                            <div class="fields">
                                <label for="width">工作面宽</label>
                                <span class="combo"><select id="width"><option>300</option></select></span>
                                <label for="slope">放坡系数</label>
                                <span class="combo"><select id="slope"><option>0</option></select></span>
                            </div>
                        </fieldset>
                        <fieldset class="fill">
                            <legend>灰土回填属性</legend>
                            <div class="fill-row">
                                <div class="layers">
                                    <table>
                                        <thead><tr><th></th><th>材料</th><th>厚度(mm)</th></tr></thead>
                                        <tbody>
                                            <tr><td>底层</td><td>3:7 灰土</td><td>1000</td></tr>
                                            <tr><td>中层</td><td>3:7 灰土</td><td>500</td></tr>
                                            <tr><td>顶层</td><td>3:7 灰土</td><td>500</td></tr>
                                        </tbody>
                                    </table>
                                </div>
                                <div class="fields">
                                    <label for="fill-width">工作面宽</label>
                                    <span class="combo"><select id="fill-width" disabled><option>300</option></select></span>
                                    <label for="fill-slope">放坡系数</label>
                                    <span class="combo"><select id="fill-slope" disabled><option>0</option></select></span>
                                </div>
                            </div>
                        </fieldset>
                    </div>
                    <p>手动生成：手工选择所依据的 独立基础 图元，生成土方</p>
                    <p>自动生成：根据本层已绘制的所有 独立基础 图元，生成土方</p>
                    <div class="actions">
                        <button type="button" class="primary">确定</button>
                        <button type="button">取消</button>
                    </div>
                </div>
            </form>
        </div>
    </main>
</body>
</html>
```

FILE: styles.css
```css
* {
    box-sizing: border-box;
}
body {
    margin: 0;
    height: 100vh;
    display: flex;
    flex-direction: column;
    overflow: hidden;
    background: #fff;
    color: #1a1a1a;
    font: 12px/16px "Open Sans", "Noto Sans CJK SC", sans-serif;
}
button, input, select {
    font: inherit;
    color: inherit;
    margin: 0;
    padding: 0;
    border: 0;
    background: none;
}
h1, h2, h3, p, ul {
    margin: 0;
    padding: 0;
    font: inherit;
    list-style: none;
}
svg {
    width: 16px;
    height: 16px;
    flex: none;
}
.sprite {
    position: absolute;
    width: 0;
    height: 0;
}
.caret {
    flex: none;
    width: 5px;
    border: solid transparent;
    border-width: 3px 3px 0;
    border-top-color: #555;
}
.caret.big {
    border-width: 4px 4px 0;
    border-top-color: #555;
}
.caret.light {
    border-top-color: #b5b5b5;
}

/* Title bar and tabs */
.titlebar {
    display: flex;
    align-items: center;
    height: 22px;
    flex: none;
}
.quick {
    display: flex;
    align-items: center;
    gap: 7px;
    width: 587px;
    padding-left: 10px;
    flex: none;
}
.quick .caret {
    margin-left: -3px;
}
.quick .overflow {
    position: relative;
    margin-left: 0;
}
.quick .overflow::before {
    content: "";
    position: absolute;
    left: -3px;
    top: -6px;
    width: 6px;
    height: 1px;
    background: #555;
}
.titlebar h1 {
    white-space: nowrap;
}
.tabs {
    display: flex;
    height: 19px;
    flex: none;
    padding-left: 6px;
    border-bottom: 1px solid #d5d8dc;
}
.tabs button {
    padding: 2px 13px 0;
    color: #444;
}
.tabs .active {
    background: #559ff5;
    color: #fff;
    border-radius: 2px 2px 0 0;
}
.help-search {
    width: 60px;
    height: 17px;
    margin: 0 -21px 0 auto;
    padding: 0 1px;
    border: 1px solid #b5b5b5;
}
.help-search::placeholder {
    color: #c0c0c0;
}

/* Ribbon */
.ribbon {
    display: flex;
    flex: none;
    height: 99px;
    padding-top: 3px;
    border-bottom: 2px solid #8f9499;
    background: linear-gradient(#fff 30%, #e8ebed);
}
.group {
    display: flex;
    flex-direction: column;
    flex: none;
    padding: 0 13px 0 9px;
    border-right: 1px solid #c9cdd1;
}
.group.draw {
    padding-right: 9px;
}
.group.identify {
    padding-left: 10px;
}
.group.edit {
    padding-left: 7px;
}
.cols {
    display: flex;
    gap: 12px;
    height: 69px;
}
.cols.tight {
    gap: 11px;
}
.draw .cols {
    gap: 9px;
}
.identify .cols {
    gap: 10px;
}
.edit .cols {
    gap: 4px;
}
.col button {
    display: flex;
    align-items: center;
    gap: 3px;
    height: 23px;
    white-space: nowrap;
}
.ribbon .col .caret {
    margin: 0 -4px 0 4px;
}
.edit .col button {
    gap: 5px;
}
.ribbon button:disabled {
    color: #b0b0b0;
}
.ribbon .col .on {
    height: 19px;
    margin: 2px 0;
    padding-right: 6px;
    background: #c8daf3;
}
.large {
    display: flex;
    flex-direction: column;
    align-items: center;
    min-width: 32px;
    padding-top: 5px;
    line-height: 17px;
}
.large svg {
    width: 30px;
    height: 30px;
    margin-bottom: 3px;
}
.large .caret {
    margin-top: 6px;
}
.group-name {
    display: flex;
    justify-content: center;
    align-items: center;
    gap: 6px;
    height: 25px;
    color: #333;
}
.group-name.start {
    justify-content: flex-start;
}
.group-name.low {
    padding-top: 4px;
}

/* Context selectors */
.contextbar {
    display: flex;
    flex: none;
    gap: 1px;
    height: 26px;
    padding-top: 1px;
    border-bottom: 1px solid #7f8489;
    background: #c8ccd1;
}
.combo {
    position: relative;
    display: block;
}
.combo select {
    appearance: none;
    width: 100%;
    height: 100%;
    padding: 0 4px;
    border: 1px solid #a9a9a9;
    background: #fff;
    color: #1a1a1a;
    opacity: 1;
}
.combo select:disabled {
    color: #999;
}
.combo::after {
    content: "";
    position: absolute;
    right: 5px;
    top: calc(50% - 1px);
    border: solid transparent;
    border-width: 3px 3px 0;
    border-top-color: #555;
}
.contextbar .combo {
    width: 99px;
    height: 23px;
}
.contextbar .combo.first {
    width: 57px;
}
.contextbar select {
    padding: 0 2px;
}

/* Panels */
.workspace {
    display: flex;
    flex: 1;
    min-height: 0;
}
.panel-title {
    display: flex;
    justify-content: flex-end;
    align-items: center;
    height: 12px;
    flex: none;
    padding-right: 4px;
    background: #d1d3d9;
}
.panel-title button {
    display: flex;
}
.panel-title svg {
    width: 8px;
    height: 8px;
}
.nav-panel {
    position: relative;
    display: flex;
    flex-direction: column;
    width: 166px;
    flex: none;
    overflow: hidden;
    border-right: 1px solid #b9bbc0;
}
.nav-head {
    height: 22px;
    flex: none;
    background: #f0f0f0;
    border-bottom: 1px solid #c8c8c8;
}
.nav-tools {
    display: flex;
    justify-content: flex-end;
    align-items: center;
    gap: 4px;
    height: 28px;
    flex: none;
    padding-right: 1px;
    background: #f0f0f0;
    border-bottom: 1px solid #c8c8c8;
}
.nav-tools button {
    display: grid;
    place-items: center;
    width: 24px;
    height: 22px;
    border: 1px solid #4a9be8;
    border-radius: 3px;
    background: #e6f2fe;
}
.nav-list {
    padding-top: 3px;
    margin-left: -20px;
}
.nav-list li {
    display: flex;
    align-items: center;
    gap: 6px;
    height: 24px;
    padding-left: 20px;
    white-space: nowrap;
}
.nav-list .category {
    padding-left: 0;
}
.nav-list .selected {
    width: 130px;
    background: linear-gradient(#c9d9f0, #c9d9f0) 0 1px / 100% 21px no-repeat;
}
.scroll-thumb {
    position: absolute;
    right: 3px;
    top: 253px;
    bottom: -8px;
    width: 8px;
    border-radius: 4px;
    background: #cbcbcb;
}
.side {
    display: flex;
    flex-direction: column;
    width: 283px;
    flex: none;
    padding-left: 4px;
    gap: 4px;
}
.panel {
    display: flex;
    flex-direction: column;
    border: 1px solid #b0b2b6;
    border-top: 0;
}
.components {
    height: 420px;
    flex: none;
}
.properties {
    flex: 1;
    min-height: 0;
    overflow: hidden;
    border-right-color: #d0d0d0;
}
.panel-tabs {
    display: flex;
    flex: none;
    height: 22px;
    background: #f0f0f0;
    border-bottom: 1px solid #c8c8c8;
}
.panel-tabs button {
    width: 65px;
    padding-top: 2px;
    border-right: 1px solid #c8c8c8;
    background: #e0e0e0;
    color: #888;
}
.panel-tabs .active {
    background: #f0f0f0;
    color: #222;
    font-weight: bold;
}
.toolbar {
    display: flex;
    flex: none;
    gap: 8px;
    height: 29px;
    padding: 3px 2px 0 5px;
    background: #f0f0f0;
    border-bottom: 1px solid #c8c8c8;
    color: #333;
}
.toolbar button {
    display: flex;
    align-items: center;
    gap: 3px;
}
.toolbar .caret {
    margin-left: 4px;
}
.toolbar .more {
    margin-left: auto;
}
.toolbar .more svg {
    width: 8px;
    height: 8px;
}
.search {
    display: flex;
    align-items: center;
    flex: none;
    height: 19px;
    padding: 1px 6px 0 2px;
    border-bottom: 1px solid #b9bbc0;
}
.search input {
    flex: 1;
    min-width: 0;
    height: 16px;
}
.search input::placeholder {
    color: #777;
}
.search svg {
    width: 12px;
    height: 12px;
}
.tree {
    padding: 3px 0 0 10px;
}
.tree li {
    display: flex;
    align-items: center;
    height: 24px;
}
.tree .open::before {
    content: "";
    width: 6px;
    height: 6px;
    margin-right: 4px;
    background: #333;
    clip-path: polygon(100% 0, 100% 100%, 0 100%);
}
.tree .l2 {
    padding-left: 20px;
}
.tree .l3 {
    padding-left: 50px;
}
.tree span {
    padding: 2px 3px;
    height: 21px;
}
.tree .selected span {
    width: 101px;
    background: #b3cdec;
}
.props {
    width: 100%;
    table-layout: fixed;
    border-collapse: collapse;
}
.c-num {
    width: 21px;
}
.c-name {
    width: 101px;
}
.c-value {
    width: 113px;
}
.props th, .props td {
    height: 21px;
    padding: 2px 3px 0;
    border: 1px solid #c8c8c8;
    font-weight: normal;
    white-space: nowrap;
}
.props th {
    padding: 2px 0 0;
    background: #f0f0f0;
    color: #444;
}
.props th.hot {
    background: #80bbfa;
    color: #fff;
    font-weight: bold;
}
.props tr > :first-child {
    border-left: 0;
}
.props td:last-child {
    padding: 0;
    text-align: center;
}
.props .link {
    color: #2459d8;
}
.props .locked {
    background: #eaeaea;
    color: #888;
}
.props .editing {
    outline: 2px solid #7d7d7d;
    outline-offset: -2px;
}
.props input {
    appearance: none;
    display: block;
    width: 14px;
    height: 14px;
    margin: 0 auto;
    border: 1px solid #8a8a8a;
    border-radius: 3px;
    background: #fff;
}
.expand {
    width: 13px;
    height: 13px;
    margin-right: 5px;
    border: 1px solid #888;
    border-radius: 2px;
    line-height: 10px;
    vertical-align: 1px;
}
.splitter {
    display: flex;
    align-items: center;
    width: 5px;
    flex: none;
    padding-top: 116px;
}
.splitter button {
    display: flex;
    align-items: center;
    width: 4px;
    height: 100px;
    margin-left: 1px;
    background: #5f6b75;
}
.splitter button::before {
    content: "";
    border: solid transparent;
    border-width: 3px 3px 3px 0;
    border-right-color: #e0e4e8;
}

/* Drawing */
.canvas {
    position: relative;
    flex: 1;
    min-width: 0;
    overflow: hidden;
    background: #000;
}
.drawing {
    display: block;
    width: 100%;
    height: 100%;
}
.drawing text {
    fill: #fff;
    text-anchor: middle;
}
.label {
    font: 17px "Noto Sans", sans-serif;
}
.axis-num {
    font: 300 30px "Roboto Condensed", "Liberation Sans", sans-serif;
}
.dim {
    font: 11px "Roboto Condensed", "Liberation Sans", sans-serif;
}

/* Dialog */
.dialog {
    position: absolute;
    left: 162px;
    top: 176px;
    width: 602px;
    background: #f0f0f0;
    border: 1px solid #c4ccd6;
    border-top: 0;
    color: #111;
}
.dialog header {
    display: flex;
    align-items: center;
    justify-content: space-between;
    height: 27px;
    padding: 0 9px 0 8px;
    background: #2b80e0;
    color: #fff;
}
.dialog header button {
    display: flex;
}
.dialog header svg {
    width: 8px;
    height: 8px;
}
.dialog-body {
    padding: 7px 11px 11px;
}
.dialog h3 {
    display: flex;
    align-items: center;
    gap: 6px;
    height: 20px;
}
.dialog h3::after {
    content: "";
    flex: 1;
    height: 1px;
    background: #bfbfbf;
}
.choices {
    display: flex;
    height: 25px;
    padding-left: 13px;
}
.choices label {
    display: flex;
    align-items: center;
    gap: 3px;
    width: 170px;
    height: 21px;
}
.choices input {
    appearance: none;
    display: grid;
    place-items: center;
    width: 14px;
    height: 14px;
    border: 1px solid #888;
    background: #fff;
}
.choices input[type="radio"] {
    border-radius: 50%;
}
.choices input[type="radio"]:checked::before {
    content: "";
    width: 6px;
    height: 6px;
    border-radius: 50%;
    background: #4a95ee;
}
.choices input[type="checkbox"] {
    border-radius: 2px;
}
.choices input[type="checkbox"]:checked {
    border-color: #559ff5;
    background: #559ff5;
}
.choices input[type="checkbox"]:checked::before {
    content: "";
    width: 8px;
    height: 5px;
    border: solid #fff;
    border-width: 0 0 2px 2px;
    transform: translateY(-1px) rotate(-45deg);
}
.sets {
    display: flex;
    gap: 7px;
    padding: 5px 3px 9px 1px;
}
fieldset {
    width: 165px;
    height: 149px;
    margin: 0;
    padding: 0 9px;
    border: 1px solid #b0b0b0;
    border-radius: 3px;
    background: #fff;
}
fieldset.fill {
    flex: 1;
    min-width: 0;
    padding: 0 11px 0 5px;
}
legend {
    padding: 0;
}
fieldset.fill legend {
    margin-left: 4px;
}
.fill-row {
    display: flex;
    gap: 10px;
}
.fields {
    display: grid;
    flex: 1;
    grid-template-columns: 1fr 75px;
    gap: 4px 0;
    align-items: center;
    align-content: start;
    padding-top: 8px;
}
.fill .fields {
    grid-template-columns: 1fr 70px;
}
.fields .combo {
    height: 26px;
}
.fields select {
    padding: 0 5px;
}
.layers {
    width: 242px;
    height: 120px;
    margin-top: 3px;
    border: 1px solid #b9b9b9;
}
.layers table {
    width: 100%;
    border-collapse: collapse;
    table-layout: fixed;
    color: #888;
}
.layers th, .layers td {
    height: 30px;
    padding: 0 3px;
    border: 1px solid #cfcfcf;
    border-top: 0;
    border-left: 0;
}
.layers th {
    height: 17px;
    background: #f0f0f0;
    color: #444;
    font-weight: normal;
}
.layers th:first-child {
    width: 44px;
}
.layers th:nth-child(2) {
    width: 97px;
}
.layers tbody tr:nth-child(2) td {
    background: #e8e6e2;
}
.dialog p {
    height: 24px;
    line-height: 24px;
}
.actions {
    display: flex;
    justify-content: flex-end;
    gap: 6px;
    padding-top: 3px;
}
.actions button {
    width: 75px;
    height: 28px;
    border: 1px solid #c4c4c4;
    border-radius: 3px;
    background: #fff;
}
.actions .primary {
    border-color: #2b80e0;
    background: #2b80e0;
    color: #fff;
}
```
